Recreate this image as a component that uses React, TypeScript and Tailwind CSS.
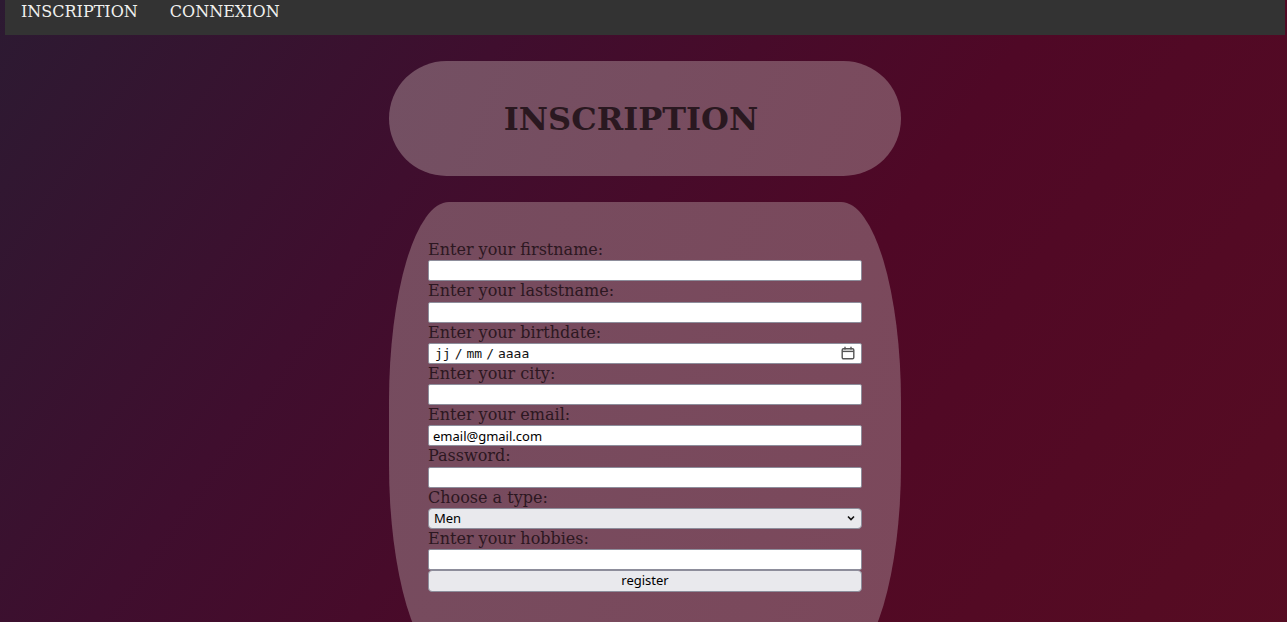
import React from "react"

// Simple registration page: top nav, title pill, oval form card

const serif = { fontFamily: '"DejaVu Serif", serif' }

const fields = [
  { label: "Enter your firstname:", kind: "text", value: "" },
  { label: "Enter your laststname:", kind: "text", value: "" },
  { label: "Enter your birthdate:", kind: "date", value: "" },
  { label: "Enter your city:", kind: "text", value: "" },
  { label: "Enter your email:", kind: "text", value: "email@gmail.com" },
  { label: "Password:", kind: "password", value: "" },
  { label: "Choose a type:", kind: "select", value: "Men" },
  { label: "Enter your hobbies:", kind: "text", value: "" },
]

const inputBox =
  "block w-full h-[21px] border border-[#8d8d9b] rounded-[2px] bg-white text-black text-[13px] leading-[19px] px-[4px] font-['Noto_Sans',sans-serif]"

function CalendarIcon() {
  return (
    <svg width="14" height="14" viewBox="0 0 14 14" fill="none" stroke="#555" strokeWidth="1.4">
      <rect x="1.2" y="2.7" width="11.6" height="10.1" rx="1.3" />
      <line x1="1.2" y1="5.4" x2="12.8" y2="5.4" />
      <line x1="4" y1="0.8" x2="4" y2="3.4" />
      <line x1="10" y1="0.8" x2="10" y2="3.4" />
    </svg>
  )
}

function Field({ label, kind, value }: { label: string; kind: string; value: string }) {
  return (
    <div>
      <label className="block h-[20.25px] text-[16px] leading-[20px] text-[#2c1721]" style={serif}>
        {label}
      </label>
      {kind === "date" && (
        <div className={inputBox + " flex items-center justify-between pl-[6px] pr-[6px]"}>
          <span className="font-['DejaVu_Sans_Mono',monospace] text-[13px] text-[#111]">
            jj<span className="mx-[4px]">/</span>mm<span className="mx-[4px]">/</span>aaaa
          </span>
          <CalendarIcon />
        </div>
      )}
      {kind === "select" && (
        <div className="flex items-center justify-between w-full h-[21px] border border-[#8d8d9b] rounded-[4px] bg-[#e9e9ed] px-[5px] text-[13px] text-black font-['Noto_Sans',sans-serif]">
          <span>{value}</span>
          <svg width="10" height="10" viewBox="0 0 10 10" fill="none" stroke="#111" strokeWidth="1.6">
            <path d="M2 3.5 L5 6.5 L8 3.5" />
          </svg>
        </div>
      )}
      {(kind === "text" || kind === "password") && (
        <input type={kind} defaultValue={value} className={inputBox} />
      )}
    </div>
  )
}

export default function App() {
  return (
    <div className="min-h-[622px] bg-[linear-gradient(125deg,#2c1a32_0%,#3f0e2e_30%,#4f0826_60%,#570c22_100%)]">
      <div className="ml-[5px] mr-[2px]">
        <nav className="h-[35px] bg-[#333333] flex pt-[2px]" style={serif}>
          <a className="px-[16px] text-[16px] leading-[19px] text-[#f0f0ee]">INSCRIPTION</a>
          <a className="px-[16px] text-[16px] leading-[19px] text-[#f0f0ee]">CONNEXION</a>
        </nav>

        <div className="mt-[26px] mx-auto w-[512px] h-[115px] rounded-full bg-[linear-gradient(110deg,#735063_0%,#7b4a5d_100%)] flex items-center justify-center pr-[28px]">
          <h1 className="text-[32px] font-bold text-[#2a1820] leading-none" style={serif}>
            INSCRIPTION
          </h1>
        </div>

        <form className="mt-[26px] mx-auto w-[512px] rounded-[60px/200px] bg-[linear-gradient(110deg,#754c5f_0%,#7c485b_100%)] px-[39px] pt-[38px] pb-[72px]">
          {fields.map((f) => (
            <Field key={f.label} {...f} />
          ))}
          <button
            type="button"
            className="block w-full h-[22px] border border-[#8d8d9b] rounded-[4px] bg-[#e9e9ed] text-[13px] text-black font-['Noto_Sans',sans-serif]"
          >
            register
          </button>
        </form>
      </div>
    </div>
  )
}
